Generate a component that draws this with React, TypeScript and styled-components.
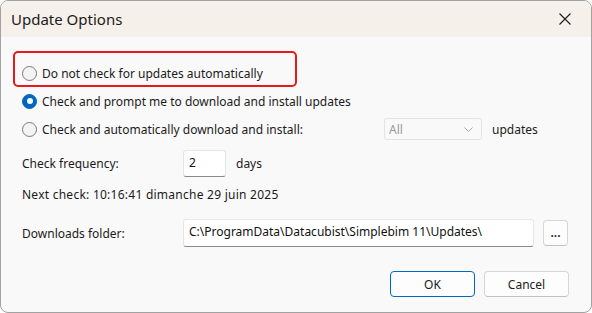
import React from 'react';
import styled, { createGlobalStyle } from 'styled-components';

const Global = createGlobalStyle`
  html, body { margin: 0; padding: 0; background: #ffffff; }
  body { font-family: "Noto Sans", "Segoe UI", sans-serif; }
`;

const Window = styled.div`
  box-sizing: border-box;
  width: 592px;
  height: 313px;
  border: 1px solid #a2a2a2;
  border-radius: 8px;
  background: #f9f9f9;
  overflow: hidden;
  display: flex;
  flex-direction: column;
  font-family: "Noto Sans", "Segoe UI", sans-serif;
  font-size: 12px;
  color: #1b1b1b;
`;

const TitleBar = styled.div`
  height: 36px;
  flex: none;
  background: #f6f0eb;
  display: flex;
  align-items: center;
  padding: 0 14px 0 10px;
  font-size: 15px;
  color: #1b1b1b;
`;

const Title = styled.span`
  flex: 1;
`;

const CloseIcon = styled.svg`
  width: 12px;
  height: 12px;
  margin-right: 6px;
`;

const Content = styled.div`
  display: flex;
  flex-direction: column;
  padding: 22px 22px 0 21px;
`;

const OptionList = styled.div`
  position: relative;
  display: flex;
  flex-direction: column;
`;

const Annotation = styled.div`
  position: absolute;
  box-sizing: border-box;
  left: -9px;
  top: -8px;
  width: 284px;
  height: 36px;
  border: 2px solid #e51a1a;
  border-radius: 5px;
  pointer-events: none;
`;

const OptionRow = styled.div`
  height: 28px;
  display: flex;
  align-items: center;
`;

const Radio = styled.span<{ $checked?: boolean }>`
  box-sizing: border-box;
  flex: none;
  width: 15px;
  height: 15px;
  border-radius: 50%;
  margin-right: 5px;
  display: flex;
  align-items: center;
  justify-content: center;
  ${p => p.$checked
    ? `background: #0067c0; border: 1px solid #0067c0;`
    : `background: #f4f4f4; border: 1px solid #7a7a7a;`}
`;

const RadioDot = styled.span`
  width: 6px;
  height: 6px;
  border-radius: 50%;
  background: #ffffff;
`;

const Label = styled.span<{ $width?: number; $spacing?: number }>`
  white-space: nowrap;
  ${p => (p.$width ? `width: ${p.$width}px; flex: none;` : '')}
  ${p => (p.$spacing ? `letter-spacing: ${p.$spacing}px;` : '')}
`;

const Select = styled.div`
  box-sizing: border-box;
  width: 98px;
  height: 22px;
  border: 1px solid #e3e3e3;
  border-radius: 3px;
  background: #f9f9f9;
  color: #9a9a9a;
  display: flex;
  align-items: center;
  padding: 0 6px 0 4px;
  margin-right: 10px;
`;

const SelectText = styled.span`
  flex: 1;
`;

const Chevron = styled.svg`
  width: 9px;
  height: 5px;
  margin-right: 2px;
`;

const FieldRow = styled.div<{ $top: number; $height: number }>`
  display: flex;
  align-items: center;
  margin-top: ${p => p.$top}px;
  height: ${p => p.$height}px;
`;

const TextBox = styled.div<{ $width: number; $height: number }>`
  box-sizing: border-box;
  width: ${p => p.$width}px;
  height: ${p => p.$height}px;
  background: #ffffff;
  border: 1px solid #e6e6e6;
  border-bottom-color: #8a8a8a;
  border-radius: 3px;
  display: flex;
  align-items: center;
  padding: 0 5px 3px 5px;
  white-space: nowrap;
  overflow: hidden;
  color: #111;
`;

const Suffix = styled.span`
  margin-left: 10px;
`;

const SmallButton = styled.div`
  box-sizing: border-box;
  width: 25px;
  height: 26px;
  margin-left: 9px;
  border: 1px solid #d6d6d6;
  border-bottom-color: #c2c2c2;
  border-radius: 4px;
  background: #fdfdfd;
  display: flex;
  align-items: center;
  justify-content: center;
  padding-bottom: 2px;
  font-weight: 600;
  color: #1b1b1b;
`;

const ButtonRow = styled.div`
  display: flex;
  justify-content: flex-end;
  gap: 9px;
  margin-top: 24px;
`;

const Button = styled.div<{ $primary?: boolean }>`
  box-sizing: border-box;
  width: 85px;
  height: 26px;
  border-radius: 4px;
  background: #fdfdfd;
  display: flex;
  align-items: center;
  justify-content: center;
  color: #1b1b1b;
  ${p => p.$primary
    ? `border: 1px solid #0067c0;`
    : `border: 1px solid #d6d6d6; border-bottom-color: #c2c2c2;`}
`;

export default function App() {
  return (
    <>
      <Global />
      <Window>
        <TitleBar>
          <Title>Update Options</Title>
          <CloseIcon viewBox="0 0 12 12">
            <path d="M0.5 0.5 L11.5 11.5 M11.5 0.5 L0.5 11.5" stroke="#1b1b1b" strokeWidth="1.1" fill="none" />
          </CloseIcon>
        </TitleBar>
        <Content>
          <OptionList>
            <Annotation />
            <OptionRow>
              <Radio />
              <Label>Do not check for updates automatically</Label>
            </OptionRow>
            <OptionRow>
              <Radio $checked>
                <RadioDot />
              </Radio>
              <Label>Check and prompt me to download and install updates</Label>
            </OptionRow>
            <OptionRow>
              <Radio />
              <Label $width={342}>Check and automatically download and install:</Label>
              <Select>
                <SelectText>All</SelectText>
                <Chevron viewBox="0 0 9 5">
                  <path d="M0.5 0.5 L4.5 4.5 L8.5 0.5" stroke="#a8a8a8" strokeWidth="1" fill="none" />
                </Chevron>
              </Select>
              <Label>updates</Label>
            </OptionRow>
          </OptionList>

          <FieldRow $top={7} $height={27}>
            <Label $width={161}>Check frequency:</Label>
            <TextBox $width={43} $height={27}>2</TextBox>
            <Suffix>days</Suffix>
          </FieldRow>

          <FieldRow $top={9} $height={16}>
            <Label $spacing={0.25}>Next check: 10:16:41 dimanche 29 juin 2025</Label>
          </FieldRow>

          <FieldRow $top={17} $height={28}>
            <Label $width={161}>Downloads folder:</Label>
            <TextBox $width={351} $height={28}>C:\ProgramData\Datacubist\Simplebim 11\Updates\</TextBox>
            <SmallButton>...</SmallButton>
          </FieldRow>

          <ButtonRow>
            <Button $primary>OK</Button>
            <Button>Cancel</Button>
          </ButtonRow>
        </Content>
      </Window>
    </>
  );
}
